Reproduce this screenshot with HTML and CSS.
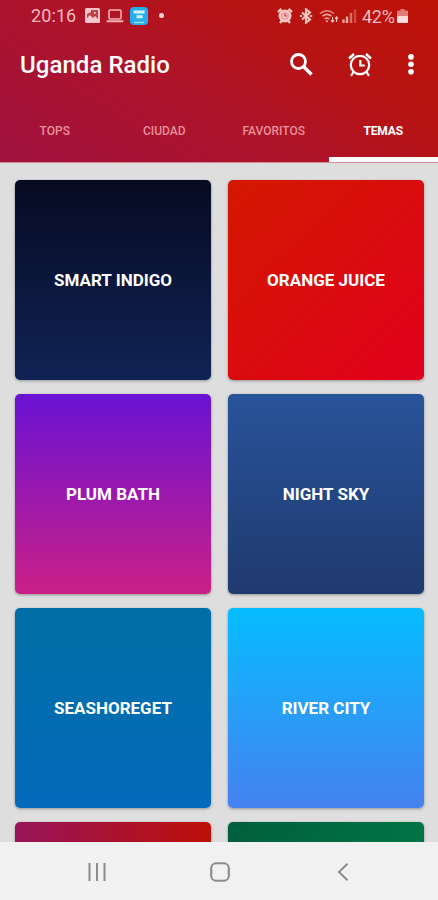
FILE: index.html
```html
<!DOCTYPE html>
<html lang="es">
<head>
  <meta charset="UTF-8">
  <title>Uganda Radio</title>
  <meta name="viewport" content="width=device-width, initial-scale=1">
  <link rel="stylesheet" href="styles.css">
</head>
<body>
  <header class="header">
    <div class="status">
      <div class="status-left">
        <span class="clock">20:16</span>
        <svg class="s-image" width="15" height="15" viewBox="0 0 15 15">
          <rect width="15" height="15" rx="1.5" fill="#f8c6c8"/>
          <rect x="2" y="2" width="11" height="11" fill="#c04048"/>
          <path d="M2 13V10l3-3 3 3 2-2 3 3v2z" fill="#f8c6c8"/>
          <path d="M2 2h4v2L2 6z" fill="#f8c6c8"/>
          <circle cx="9.8" cy="4.8" r="1.1" fill="#f8c6c8"/>
        </svg>
        <svg class="s-laptop" width="18" height="14" viewBox="0 0 18 14">
          <rect x="3" y="1" width="12" height="9" rx="1" fill="none" stroke="#f3b0b4" stroke-width="1.6"/>
          <rect x="0.5" y="11.2" width="17" height="2" rx="0.8" fill="#f3b0b4"/>
        </svg>
        <svg class="s-app" width="18" height="18" viewBox="0 0 18 18">
          <rect width="18" height="18" rx="4" fill="#25aee9"/>
          <path d="M3.5 5h11M6.5 9.8h6" stroke="#e4f6fe" stroke-width="3"/>
          <path d="M4 5h10M7 9.8h5" stroke="#86d3f4" stroke-width="1" stroke-dasharray="1 1.5"/>
          <path d="M4 15.5h10" stroke="#a9e2f9" stroke-width="1.3"/>
        </svg>
        <span class="dot"></span>
      </div>
      <div class="status-right">
        <svg class="s-alarm" width="16" height="16" viewBox="0 0 16 16">
          <path d="M1 4l3.5-3M15 4l-3.500-3M3 15l2-2.500M13 15l-2-2.500" stroke="#f8c6c2" stroke-width="2.400"/>
          <circle cx="8" cy="8" r="6.500" fill="#f8c6c2"/>
          <circle cx="8" cy="8" r="3.300" fill="none" stroke="#dc8580" stroke-width="0.900"/>
          <path d="M8 5.800V8h2" fill="none" stroke="#bd3036" stroke-width="1.100"/>
        </svg>
        <svg class="s-bluetooth" width="14" height="16" viewBox="0 0 14 16">
          <path d="M3 4.500l8 7-4 3.200V1.300l4 3.200-8 7" fill="none" stroke="#f8c6c2" stroke-width="2.100"/>
          <path d="M0.800 8h2.400M10.800 8h2.400" stroke="#f8c6c2" stroke-width="2.200"/>
        </svg>
        <svg class="s-wifi" width="20" height="15" viewBox="0 0 20 15">
          <path d="M1 4.500Q8 -1 15 4.500" fill="none" stroke="#e28a80" stroke-width="1.500"/>
          <path d="M3.500 7.200Q8 3.500 12.500 7.200M5.700 10Q8 8 10.300 10" fill="none" stroke="#e8a39b" stroke-width="1.500"/>
          <path d="M6.500 11.500h3L8 13.500z" fill="#f8c6c2"/>
          <path d="M13.500 8v5M12 11.200l1.500 2 1.500-2M17.500 13V8M16 9.800l1.500-2 1.500 2" fill="none" stroke="#f8c6c2" stroke-width="1.100"/>
        </svg>
        <svg class="s-signal" width="15" height="14" viewBox="0 0 15 14">
          <path d="M1.500 14v-3.500M5 14V7.500" stroke="#f2a99d" stroke-width="2.400"/>
          <path d="M9 14V4" stroke="#df6f65" stroke-width="2.400"/>
          <path d="M13 14V0.500" stroke="#cf4a40" stroke-width="2.400"/>
        </svg>
        <span class="percent">42%</span>
        <svg class="s-battery" width="11" height="14" viewBox="0 0 11 14">
          <path d="M3.500 0h4v1.500H10a1 1 0 0 1 1 1V8H0V2.500a1 1 0 0 1 1-1h2.500z" fill="#e07c74"/>
          <path d="M0 7h11v6a1 1 0 0 1-1 1H1a1 1 0 0 1-1-1z" fill="#fcdeda"/>
        </svg>
      </div>
    </div>

    <div class="toolbar">
      <h1 class="title">Uganda Radio</h1>
      <svg class="t-search" width="24" height="24" viewBox="0 0 24 24">
        <circle cx="9.500" cy="8.500" r="7" fill="none" stroke="#fff" stroke-width="2.800"/>
        <path d="M14.500 13.500l8 8" stroke="#fff" stroke-width="3.400"/>
      </svg>
      <svg class="t-alarm" width="24" height="24" viewBox="0 0 24 24" fill="none" stroke="#fff">
        <circle cx="12" cy="12" r="9.200" stroke-width="2.300"/>
        <path d="M12.300 7v5.500h4.500" stroke-width="2.200"/>
        <path d="M1 5.500l5-4.500M23 5.500l-5-4.500" stroke-width="2.400"/>
        <path d="M5.500 19L3 22.800M18.500 19L21 22.800" stroke-width="2.200"/>
      </svg>
      <svg class="t-more" width="6" height="22" viewBox="0 0 6 22" fill="#fff">
        <circle cx="3" cy="2.900" r="2.800"/>
        <circle cx="3" cy="10.300" r="2.800"/>
        <circle cx="3" cy="17.700" r="2.800"/>
      </svg>
    </div>

    <nav class="tabs">
      <div class="tab">TOPS</div>
      <div class="tab">CIUDAD</div>
      <div class="tab">FAVORITOS</div>
      <div class="tab active">TEMAS</div>
    </nav>
  </header>

  <main class="themes">
    <div class="card indigo">SMART INDIGO</div>
    <div class="card orange">ORANGE JUICE</div>
    <div class="card plum">PLUM BATH</div>
    <div class="card night">NIGHT SKY</div>
    <div class="card seashore">SEASHOREGET</div>
    <div class="card river">RIVER CITY</div>
    <div class="card cherry"></div>
    <div class="card green"></div>
  </main>

  <footer class="navbar">
    <svg width="18" height="18" viewBox="0 0 18 18">
      <path d="M1.500 0v18M9 0v18M16.500 0v18" stroke="#8a8a8a" stroke-width="2"/>
    </svg>
    <svg width="20" height="20" viewBox="0 0 20 20">
      <rect x="1.200" y="1.200" width="17.600" height="17.600" rx="5" fill="none" stroke="#8a8a8a" stroke-width="2"/>
    </svg>
    <svg width="20" height="18" viewBox="0 0 20 18">
      <path d="M14.500 0.800L6 9l8.500 8.200" fill="none" stroke="#8a8a8a" stroke-width="1.900"/>
    </svg>
  </footer>
</body>
</html>
```

FILE: styles.css
```css
* {
  box-sizing: border-box;
}
body {
  margin: 0;
  height: 900px;
  display: flex;
  flex-direction: column;
  overflow: hidden;
  font-family: Roboto, "Liberation Sans", sans-serif;
  background: #dedede;
}
svg {
  display: block;
  flex: none;
}

/* header */
.header {
  height: 163px;
  flex: none;
  background: linear-gradient(32deg, #a11240 0%, #ae1328 45%, #b61313 70%, #bd1206 100%);
  border-bottom: 1px solid #d58b93;
  color: #fff;
}
.status {
  height: 32px;
  display: flex;
  justify-content: space-between;
  padding: 0 30px 0 31px;
  color: #f6bcbf;
}
.status-left, .status-right {
  display: flex;
  align-items: center;
}
.status-left { padding-bottom: 1px; }
.clock {
  font-size: 18px;
  letter-spacing: 0.1px;
  width: 54px;
}
.s-laptop { margin-left: 6px; }
.s-app { margin-left: 6px; }
.dot {
  width: 5px;
  height: 5px;
  border-radius: 50%;
  background: #fbd3d3;
  margin-left: 11px;
}
.s-bluetooth { margin-left: 6px; }
.s-wifi { margin-left: 6px; }
.s-signal { margin-left: 3px; }
.percent {
  font-size: 18px;
  margin-left: 5px;
  width: 35px;
  letter-spacing: -0.3px;
}
.toolbar {
  height: 65px;
  display: flex;
  align-items: center;
  padding: 0 24px 0 20px;
}
.title {
  flex: 1;
  margin: 0;
  font-size: 24px;
  font-weight: 500;
  letter-spacing: 0.05px;
  white-space: nowrap;
}
.t-alarm { margin-left: 35px; }
.t-more { margin-left: 36px; }
.tabs {
  height: 65px;
  display: flex;
}
.tab {
  flex: 1;
  display: flex;
  align-items: center;
  justify-content: center;
  border-bottom: 5px solid transparent;
  padding-top: 7px;
  font-size: 12px;
  font-weight: 500;
  color: #e88f9a;
}
.tab.active {
  color: #fff;
  font-weight: 700;
  letter-spacing: -0.1px;
  border-bottom-color: #fff;
}

/* theme cards */
.themes {
  flex: 1;
  min-height: 0;
  overflow: hidden;
  display: grid;
  grid-template-columns: 196px 196px;
  grid-auto-rows: 200px;
  gap: 14px 17px;
  padding: 16.6px 14px 0 15px;
}
.card {
  display: flex;
  align-items: center;
  justify-content: center;
  padding-top: 1px;
  border-radius: 5px;
  box-shadow: 0 1px 3px rgba(0,0,0,0.35);
  color: #fff;
  font-size: 17px;
  font-weight: 700;
}
.indigo { background: linear-gradient(#070a22, #102355); }
.orange { background: linear-gradient(135deg, #d31800, #e1001c); }
.plum { background: linear-gradient(#6912d3, #cb2087); }
.night { background: linear-gradient(#28539a, #203a6f); }
.seashore { background: linear-gradient(#006fa5, #046abb); }
.river { background: linear-gradient(#06bcff, #4582ef); }
.cherry { background: linear-gradient(90deg, #981459, #bd1008); }
.green { background: linear-gradient(100deg, #005f3e, #007845); }

/* system buttons */
.navbar {
  height: 58px;
  flex: none;
  display: flex;
  align-items: center;
  justify-content: space-between;
  padding: 2px 85px 0 88px;
  background: #f1f1f1;
}
```
